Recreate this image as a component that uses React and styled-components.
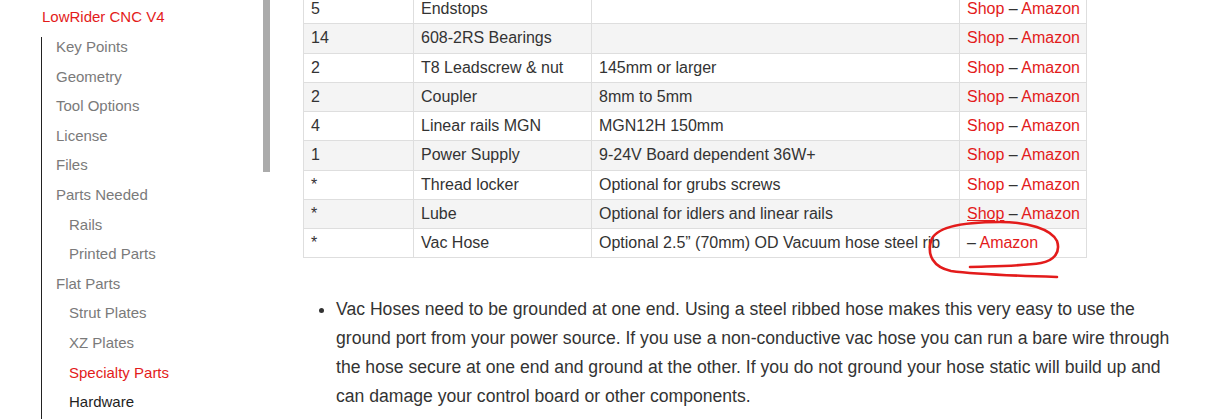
import React from 'react';
import styled, { createGlobalStyle } from 'styled-components';

const GlobalStyle = createGlobalStyle`
	html, body {
		margin: 0;
		padding: 0;
		background: #fff;
		overflow: hidden;
	}
	body {
		font-family: 'Liberation Sans', Arial, sans-serif;
		color: #333;
	}
`;

const Page = styled.div`
	display: flex;
	width: 1219px;
	height: 419px;
	overflow: hidden;
`;

const Sidebar = styled.aside`
	width: 303px;
	flex-shrink: 0;
	display: flex;
`;

const NavColumn = styled.div`
	width: 221px;
	padding: 2px 0 0 41px;
`;

const NavTitle = styled.a`
	display: block;
	padding-left: 1px;
	font-size: 15px;
	line-height: 30px;
	color: #e31b1b;
	text-decoration: none;
`;

const NavList = styled.ul`
	position: relative;
	list-style: none;
	margin: 0;
	padding: 0 0 0 15px;

	&::before {
		content: '';
		position: absolute;
		left: 0;
		top: 5px;
		bottom: -20px;
		width: 1px;
		background: #222;
	}
`;

const NavItem = styled.li`
	font-size: 15px;
	line-height: 29.6px;
	padding-left: ${(props) => (props.sub ? '13px' : '0')};
	color: ${(props) => (props.active ? '#e31b1b' : props.current ? '#1e1e1e' : '#7a7a7a')};
	white-space: nowrap;
`;

const ScrollTrack = styled.div`
	width: 7px;
	margin-left: 1px;
`;

const ScrollThumb = styled.div`
	height: 172px;
	background: #ababab;
`;

const Main = styled.main`
	position: relative;
	width: 880px;
	margin-top: -6px;
`;

const Table = styled.table`
	width: 783px;
	border-collapse: collapse;
	font-size: 16px;
	table-layout: fixed;
`;

const Row = styled.tr`
	background: ${(props) => (props.shade ? '#f4f4f4' : '#fff')};
`;

const Cell = styled.td`
	border: 1px solid #dedede;
	padding: 2px 7px;
	line-height: 24.25px;
	color: #333;
	white-space: nowrap;
	overflow: hidden;
	vertical-align: top;
`;

const Link = styled.span`
	color: #e31b1b;
	text-decoration: ${(props) => (props.underline ? 'underline' : 'none')};
`;

const Dash = styled.span`
	color: #333;
`;

const Scribble = styled.svg`
	position: absolute;
	left: 620px;
	top: 223px;
	overflow: visible;
	pointer-events: none;
`;

const Notes = styled.ul`
	margin: 37px 0 0;
	padding-left: 33px;
	font-size: 17.6px;
	line-height: 29px;
	color: #333;
`;

const Note = styled.li`
	padding-left: 0;
`;

const nav = [
	{ label: 'Key Points' },
	{ label: 'Geometry' },
	{ label: 'Tool Options' },
	{ label: 'License' },
	{ label: 'Files' },
	{ label: 'Parts Needed' },
	{ label: 'Rails', sub: true },
	{ label: 'Printed Parts', sub: true },
	{ label: 'Flat Parts' },
	{ label: 'Strut Plates', sub: true },
	{ label: 'XZ Plates', sub: true },
	{ label: 'Specialty Parts', sub: true, active: true },
	{ label: 'Hardware', sub: true, current: true }
];

const parts = [
	['5', 'Endstops', ''],
	['14', '608-2RS Bearings', ''],
	['2', 'T8 Leadscrew & nut', '145mm or larger'],
	['2', 'Coupler', '8mm to 5mm'],
	['4', 'Linear rails MGN', 'MGN12H 150mm'],
	['1', 'Power Supply', '9-24V Board dependent 36W+'],
	['*', 'Thread locker', 'Optional for grubs screws'],
	['*', 'Lube', 'Optional for idlers and linear rails'],
	['*', 'Vac Hose', 'Optional 2.5\u201d (70mm) OD Vacuum hose steel rib', true]
];

export default function App() {
	return (
		<Page>
			<GlobalStyle />
			<Sidebar>
				<NavColumn>
					<NavTitle>LowRider CNC V4</NavTitle>
					<NavList>
						{nav.map((item) => (
							<NavItem key={item.label} sub={item.sub} active={item.active} current={item.current}>
								{item.label}
							</NavItem>
						))}
					</NavList>
				</NavColumn>
				<ScrollTrack>
					<ScrollThumb />
				</ScrollTrack>
			</Sidebar>

			<Main>
				<Table>
					<colgroup>
						<col style={{ width: 110 }} />
						<col style={{ width: 178 }} />
						<col style={{ width: 368 }} />
						<col style={{ width: 127 }} />
					</colgroup>
					<tbody>
						{parts.map((p, i) => (
							<Row key={i} shade={i % 2 === 1}>
								<Cell>{p[0]}</Cell>
								<Cell>{p[1]}</Cell>
								<Cell>{p[2]}</Cell>
								<Cell>
									{p[3] ? (
										<>
											<Dash>– </Dash>
											<Link>Amazon</Link>
										</>
									) : (
										<>
											<Link underline={i === 7}>Shop</Link>
											<Dash> – </Dash>
											<Link>Amazon</Link>
										</>
									)}
								</Cell>
							</Row>
						))}
					</tbody>
				</Table>

				<Scribble width="140" height="64" viewBox="0 0 140 64">
					<path
						d="M134 60 C 100 59, 50 57, 28 54 C 10 50, 4 38, 8 24 C 12 10, 40 5, 77 5 C 105 5, 128 12, 134 24 C 138 36, 130 44, 118 46 C 100 49, 80 49, 47 50"
						fill="none"
						stroke="#e31b1b"
						strokeWidth="2.6"
						strokeLinecap="round"
						strokeLinejoin="round"
					/>
				</Scribble>

				<Notes>
					<Note>
						Vac Hoses need to be grounded at one end. Using a steel ribbed hose makes this very easy to use the
						ground port from your power source. If you use a non-conductive vac hose you can run a bare wire
						through the hose secure at one end and ground at the other. If you do not ground your hose static
						will build up and can damage your control board or other components.
					</Note>
				</Notes>
			</Main>
		</Page>
	);
}
